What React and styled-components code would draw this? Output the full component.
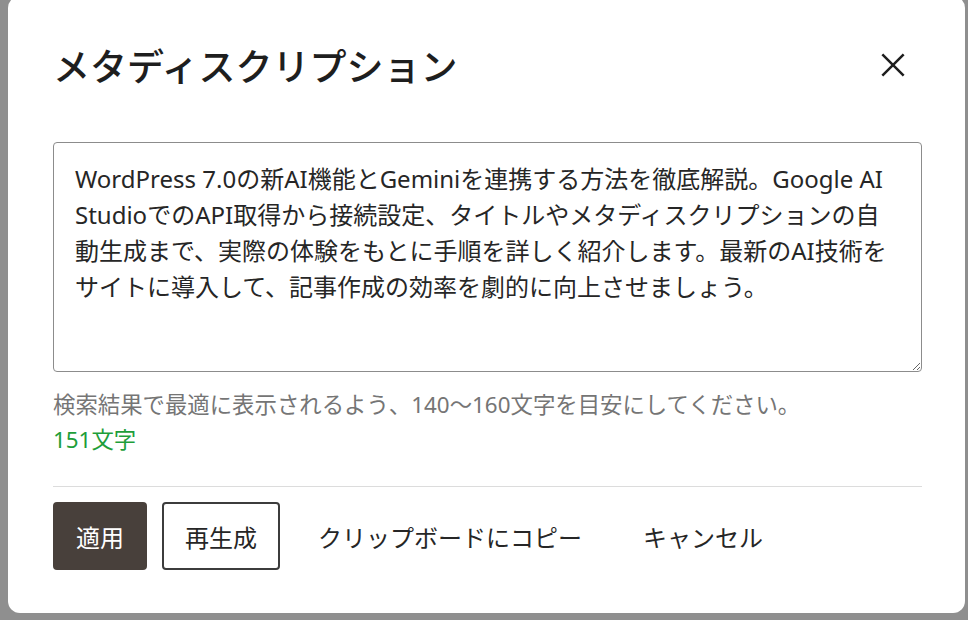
import React, { useState } from 'react';
import styled, { createGlobalStyle } from 'styled-components';

const GlobalStyle = createGlobalStyle`
  html, body {
    margin: 0;
    padding: 0;
    background: #8f8f8f;
    overflow: hidden;
  }
  * {
    box-sizing: border-box;
  }
`;

const Overlay = styled.div`
  width: 968px;
  height: 620px;
  padding: 0 3px 0 8px;
  font-family: "Noto Sans", "Noto Sans CJK JP", sans-serif;
`;

const Modal = styled.div`
  margin-top: -4px;
  width: 957px;
  height: 617px;
  background: #fff;
  border-radius: 12px;
  padding: 45px 43px 43px 45px;
  display: flex;
  flex-direction: column;
`;

const Header = styled.div`
  display: flex;
  align-items: center;
  justify-content: space-between;
  height: 48px;
`;

const Title = styled.h1`
  margin: 0;
  font-family: "Noto Sans CJK JP", sans-serif;
  font-size: 37px;
  font-weight: 500;
  line-height: 48px;
  color: #1e1e1e;
`;

const CloseButton = styled.button`
  width: 40px;
  height: 40px;
  margin-right: 9px;
  border: none;
  background: none;
  padding: 0;
  display: flex;
  align-items: center;
  justify-content: center;
  cursor: pointer;
  color: #1e1e1e;
`;

const Body = styled.div`
  margin-top: 53px;
  display: flex;
  flex-direction: column;
`;

const TextArea = styled.textarea`
  width: 869px;
  height: 230px;
  border: 1px solid #8c8c8c;
  border-radius: 4px;
  padding: 18px 21px 10px;
  font-family: "Noto Sans", "Noto Sans CJK JP", sans-serif;
  font-size: 24px;
  line-height: 1.5;
  color: #262626;
  resize: vertical;
  outline: none;
`;

const Help = styled.p`
  margin: 16px 0 0;
  font-size: 22.4px;
  line-height: 34px;
  color: #757575;
`;

const Count = styled.p`
  margin: 1px 0 0;
  font-size: 22.4px;
  line-height: 34px;
  color: ${(p) => (p.$ok ? '#1e9e3a' : '#cc1818')};
`;

const Divider = styled.hr`
  margin: 29px 0 15px;
  width: 869px;
  border: none;
  border-top: 1px solid #dcdcdc;
`;

const Actions = styled.div`
  display: flex;
  gap: 15px;
`;

const Button = styled.button`
  height: 68px;
  padding: 0 ${(p) => (p.$variant === 'ghost' ? 21 : 21)}px;
  border-radius: 4px;
  font-family: "Noto Sans CJK JP", sans-serif;
  font-size: 24px;
  cursor: pointer;
  background: ${(p) => (p.$variant === 'primary' ? '#48403b' : '#fff')};
  color: ${(p) => (p.$variant === 'primary' ? '#fff' : '#262626')};
  border: ${(p) =>
    p.$variant === 'primary'
      ? '2px solid #48403b'
      : p.$variant === 'secondary'
      ? '2px solid #3c3c3c'
      : '2px solid transparent'};
`;

const DESC =
  'WordPress 7.0の新AI機能とGeminiを連携する方法を徹底解説。Google AI Studioでの' +
  'API取得から接続設定、タイトルやメタディスクリプションの自動生成まで、実際の体験をもとに手順を詳しく紹介します。' +
  '最新のAI技術をサイトに導入して、記事作成の効率を劇的に向上させましょう。';

const App = () => {
  const [text, setText] = useState(DESC);
  const count = 151;
  return (
    <>
      <GlobalStyle />
      <Overlay>
        <Modal>
          <Header>
            <Title>メタディスクリプション</Title>
            <CloseButton aria-label="閉じる">
              <svg width="32" height="32" viewBox="0 0 24 24" fill="none" stroke="currentColor" strokeWidth="1.9" strokeLinecap="butt">
                <path d="M4 4l16 16M20 4L4 20" />
              </svg>
            </CloseButton>
          </Header>
          <Body>
            <TextArea value={text} onChange={(e) => setText(e.target.value)} />
            <Help>検索結果で最適に表示されるよう、140〜160文字を目安にしてください。</Help>
            <Count $ok={count >= 140 && count <= 160}>{count}文字</Count>
          </Body>
          <Divider />
          <Actions>
            <Button $variant="primary">適用</Button>
            <Button $variant="secondary">再生成</Button>
            <Button $variant="ghost">クリップボードにコピー</Button>
            <Button $variant="ghost">キャンセル</Button>
          </Actions>
        </Modal>
      </Overlay>
    </>
  );
};

export default App;
